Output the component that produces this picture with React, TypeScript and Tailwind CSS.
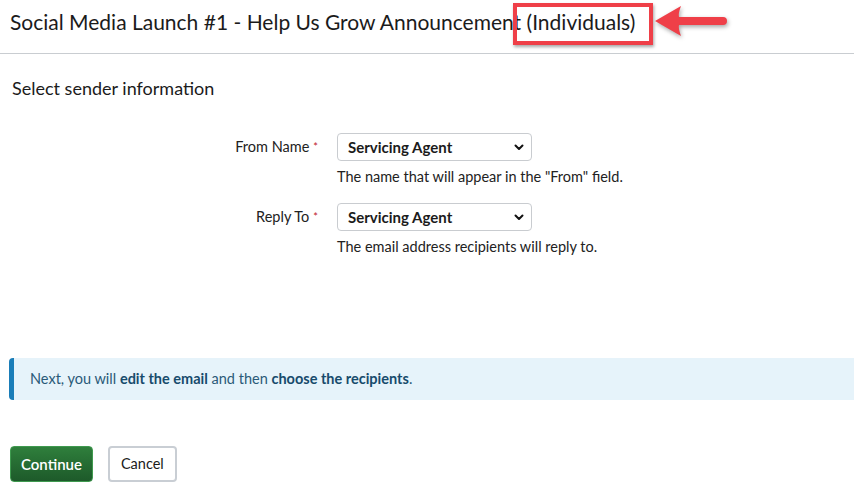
import React from 'react';

const font = { fontFamily: '"Source Sans Pro", Lato, "Liberation Sans", sans-serif' };

function Chevron() {
  return (
    <svg width="10" height="10" viewBox="0 0 10 10" className="absolute right-[7px] top-1/2 -translate-y-1/2 pointer-events-none">
      <path d="M1.5 3.5 L5 7 L8.5 3.5" fill="none" stroke="#111" strokeWidth="2" strokeLinecap="round" strokeLinejoin="round" />
    </svg>
  );
}

function SelectBox() {
  return (
    <div className="relative w-[195px] h-[28px] border border-[#c9ccd0] rounded-[4px] bg-white flex items-center pl-[10px]">
      <span className="text-[15px] font-bold text-[#1b1b1b]">Servicing Agent</span>
      <Chevron />
    </div>
  );
}

function Field({ label, help }: { label: string; help: string }) {
  return (
    <div className="flex">
      <div className="w-[318px] flex justify-end pt-[3px] text-[14.5px] text-[#222]">
        {label}
        <span className="text-[#c0202a] text-[11px] ml-[4px] leading-[22px]">*</span>
      </div>
      <div className="ml-[19px]">
        <SelectBox />
        <div className="mt-[6px] text-[14.5px] text-[#222] leading-[20px]">{help}</div>
      </div>
    </div>
  );
}

export default function App() {
  return (
    <div className="w-[854px] h-[496px] bg-white overflow-hidden" style={font}>
      {/* header */}
      <div className="h-[54px] border-b border-[#c9cdd1] px-[10px] pt-[9px]">
        <h1 className="text-[21px] text-[#1b1b1b] leading-[26px] whitespace-nowrap">
          Social Media Launch #1 - Help Us Grow Announcement{' '}
          <span className="relative">
            (Individuals)
            <span className="absolute -left-[14px] -right-[18px] -top-[6px] -bottom-[11px] border-[4px] border-[#ef3f48] shadow-[1px_2px_3px_rgba(0,0,0,0.35)]" />
            <svg width="76" height="36" viewBox="0 0 76 36" className="absolute left-[calc(100%+18px)] -top-[4px] drop-shadow-[1px_2px_2px_rgba(0,0,0,0.35)]">
              <path d="M2 16 L28 1 Q25 9 26 12 L70 12 Q74 12 74 16 Q74 20 70 20 L26 20 Q25 23 28 31 Z" fill="#ef3f48" />
            </svg>
          </span>
        </h1>
      </div>

      <div className="px-[12px] pt-[22px] text-[18px] text-[#1b1b1b] leading-[24px]">Select sender information</div>

      <div className="mt-[33px] flex flex-col gap-[16px]">
        <Field label="From Name" help={'The name that will appear in the "From" field.'} />
        <Field label="Reply To" help="The email address recipients will reply to." />
      </div>

      <div className="mt-[101px] ml-[9px] h-[42px] bg-[#e6f3fa] border-l-[5px] border-[#1a7db8] rounded-l-[4px] flex items-center pl-[16px] text-[14.5px] text-[#2a5a78]">
        <span>
          Next, you will <b className="text-[#174b6c]">edit the email</b> and then <b className="text-[#174b6c]">choose the recipients</b>.
        </span>
      </div>

      <div className="mt-[46px] ml-[10px] flex gap-[15px]">
        <button className="h-[36px] px-[10px] rounded-[4px] border border-[#3f9a4f] bg-gradient-to-b from-[#2f7f3c] to-[#1d5a2a] text-white text-[15px] font-semibold">
          Continue
        </button>
        <button className="h-[36px] px-[11px] rounded-[4px] border-2 border-[#c9ced4] bg-white text-[#1b1b1b] text-[14.5px]">
          Cancel
        </button>
      </div>
    </div>
  );
}
